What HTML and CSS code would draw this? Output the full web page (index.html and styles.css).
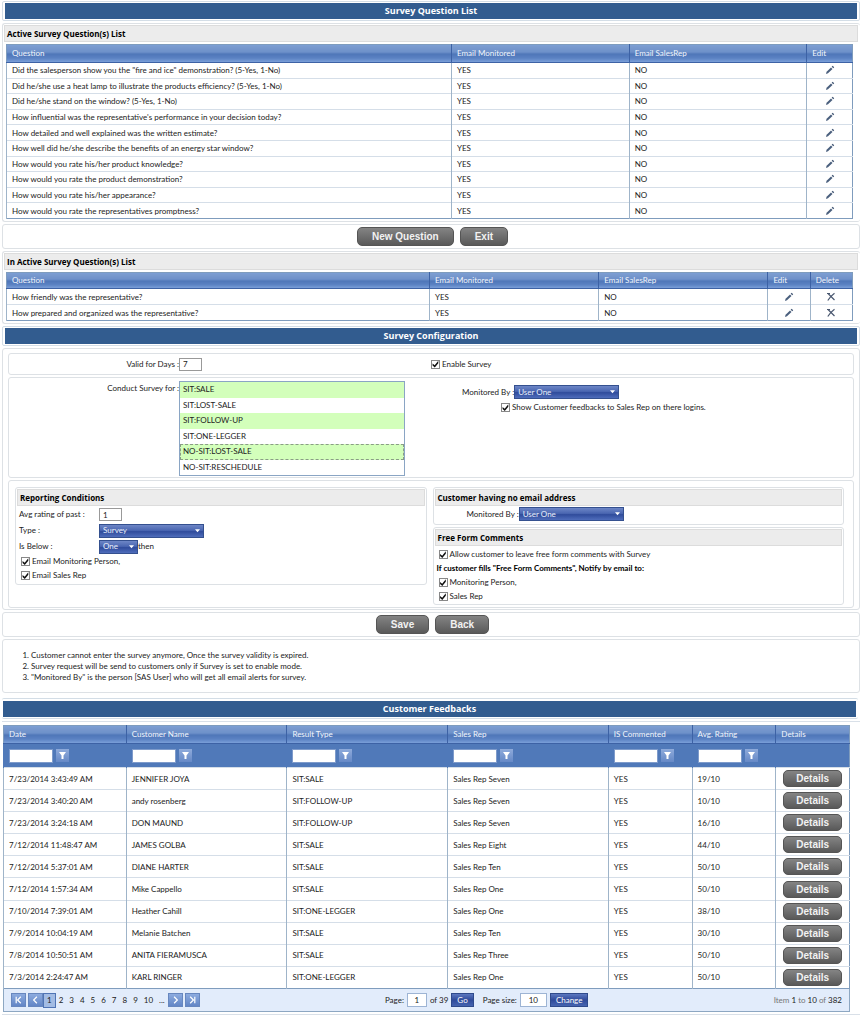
FILE: index.html
```html
<!DOCTYPE html>
<html lang="en">
<head>
<meta charset="utf-8">
<title>Survey Question List</title>
<link rel="stylesheet" href="styles.css">
</head>
<body>
<svg class="sprite" aria-hidden="true">
  <symbol id="pencil" viewBox="0 0 10 10"><path d="M1 9l.6-2.200L6 2.400l1.500 1.500L3 8.200z" fill="#4a5f7d"/><path d="M6.700 1.700L7.700.8 9.200 2.300 8.300 3.200z" fill="#3c5170"/></symbol>
  <symbol id="cross" viewBox="0 0 10 10"><path d="M2 1.500L8.500 8M8.500 1.200C6 3 3.500 5.500 1.800 8.500" fill="none" stroke="#4a5870" stroke-width="1.200"/><path d="M1 1.500h3" stroke="#4a5870"/></symbol>
  <symbol id="funnel" viewBox="0 0 13 13"><path d="M3 3h7L7.500 6.500V10h-2V6.500z" fill="#fff"/></symbol>
  <symbol id="caret" viewBox="0 0 6 4"><path d="M0 0h6L3 3.500z" fill="#fff"/></symbol>
</svg>

<main class="page">
  <header class="banner-box"><h1 class="banner">Survey Question List</h1></header>

  <section class="box list-box">
    <h2 class="heading">Active Survey Question(s) List</h2>
    <table class="grid grid-active">
      <colgroup><col class="w-q"><col class="w-e"><col class="w-e"><col></colgroup>
      <thead><tr><th>Question</th><th>Email Monitored</th><th>Email SalesRep</th><th>Edit</th></tr></thead>
      <tbody>
        <tr><td>Did the salesperson show you the "fire and ice" demonstration? (5-Yes, 1-No)</td><td>YES</td><td>NO</td><td class="act"><button class="icon" aria-label="Edit"><svg><use href="#pencil"/></svg></button></td></tr>
        <tr><td>Did he/she use a heat lamp to illustrate the products efficiency? (5-Yes, 1-No)</td><td>YES</td><td>NO</td><td class="act"><button class="icon" aria-label="Edit"><svg><use href="#pencil"/></svg></button></td></tr>
        <tr><td>Did he/she stand on the window? (5-Yes, 1-No)</td><td>YES</td><td>NO</td><td class="act"><button class="icon" aria-label="Edit"><svg><use href="#pencil"/></svg></button></td></tr>
        <tr><td>How influential was the representative's performance in your decision today?</td><td>YES</td><td>NO</td><td class="act"><button class="icon" aria-label="Edit"><svg><use href="#pencil"/></svg></button></td></tr>
        <tr><td>How detailed and well explained was the written estimate?</td><td>YES</td><td>NO</td><td class="act"><button class="icon" aria-label="Edit"><svg><use href="#pencil"/></svg></button></td></tr>
        <tr><td>How well did he/she describe the benefits of an energy star window?</td><td>YES</td><td>NO</td><td class="act"><button class="icon" aria-label="Edit"><svg><use href="#pencil"/></svg></button></td></tr>
        <tr><td>How would you rate his/her product knowledge?</td><td>YES</td><td>NO</td><td class="act"><button class="icon" aria-label="Edit"><svg><use href="#pencil"/></svg></button></td></tr>
        <tr><td>How would you rate the product demonstration?</td><td>YES</td><td>NO</td><td class="act"><button class="icon" aria-label="Edit"><svg><use href="#pencil"/></svg></button></td></tr>
        <tr><td>How would you rate his/her appearance?</td><td>YES</td><td>NO</td><td class="act"><button class="icon" aria-label="Edit"><svg><use href="#pencil"/></svg></button></td></tr>
        <tr><td>How would you rate the representatives promptness?</td><td>YES</td><td>NO</td><td class="act"><button class="icon" aria-label="Edit"><svg><use href="#pencil"/></svg></button></td></tr>
      </tbody>
    </table>
  </section>

  <div class="box actions"><button class="btn">New Question</button><button class="btn">Exit</button></div>

  <section class="box list-box">
    <h2 class="heading">In Active Survey Question(s) List</h2>
    <table class="grid">
      <colgroup><col class="w-q2"><col class="w-e2"><col class="w-e2"><col class="w-a2"><col></colgroup>
      <thead><tr><th>Question</th><th>Email Monitored</th><th>Email SalesRep</th><th>Edit</th><th>Delete</th></tr></thead>
      <tbody>
        <tr><td>How friendly was the representative?</td><td>YES</td><td>NO</td><td class="act"><button class="icon" aria-label="Edit"><svg><use href="#pencil"/></svg></button></td><td class="act"><button class="icon" aria-label="Delete"><svg><use href="#cross"/></svg></button></td></tr>
        <tr><td>How prepared and organized was the representative?</td><td>YES</td><td>NO</td><td class="act"><button class="icon" aria-label="Edit"><svg><use href="#pencil"/></svg></button></td><td class="act"><button class="icon" aria-label="Delete"><svg><use href="#cross"/></svg></button></td></tr>
      </tbody>
    </table>
  </section>

  <header class="banner-box"><h2 class="banner">Survey Configuration</h2></header>

  <form class="box config">
    <div class="box pair validity">
      <div class="field"><label class="lead" for="days">Valid for Days :</label><input class="text short" id="days" value="7"></div>
      <label class="check"><input type="checkbox" checked>Enable Survey</label>
    </div>

    <div class="box pair conduct">
      <div class="field"><label class="lead" for="types">Conduct Survey for :</label>
        <select class="listbox" id="types" multiple size="6">
          <option selected>SIT:SALE</option><option>SIT:LOST-SALE</option><option selected>SIT:FOLLOW-UP</option><option>SIT:ONE-LEGGER</option><option class="current" selected>NO-SIT:LOST-SALE</option><option>NO-SIT:RESCHEDULE</option>
        </select>
      </div>
      <div class="monitor">
        <div class="field"><label for="mon">Monitored By :</label><span class="drop"><select id="mon"><option>User One</option></select><svg><use href="#caret"/></svg></span></div>
        <label class="check indent"><input type="checkbox" checked>Show Customer feedbacks to Sales Rep on there logins.</label>
      </div>
    </div>

    <div class="box conditions">
      <section class="box panel report">
        <h3 class="heading">Reporting Conditions</h3>
        <div class="rows">
          <label for="avg">Avg rating of past :</label><div><input class="text short" id="avg" value="1"></div>
          <label for="type">Type :</label><div><span class="drop"><select id="type"><option>Survey</option></select><svg><use href="#caret"/></svg></span></div>
          <label for="below">Is Below :</label><div class="field"><span class="drop small"><select id="below"><option>One</option></select><svg><use href="#caret"/></svg></span><span>then</span></div>
        </div>
        <div class="checks">
          <label class="check"><input type="checkbox" checked>Email Monitoring Person,</label>
          <label class="check"><input type="checkbox" checked>Email Sales Rep</label>
        </div>
      </section>
      <div class="stack">
        <section class="box panel">
          <h3 class="heading">Customer having no email address</h3>
          <div class="field noemail"><label for="mon2">Monitored By :</label><span class="drop"><select id="mon2"><option>User One</option></select><svg><use href="#caret"/></svg></span></div>
        </section>
        <section class="box panel">
          <h3 class="heading">Free Form Comments</h3>
          <div class="checks free">
            <label class="check"><input type="checkbox" checked>Allow customer to leave free form comments with Survey</label>
            <p class="note">If customer fills "Free Form Comments", Notify by email to:</p>
            <label class="check"><input type="checkbox" checked>Monitoring Person,</label>
            <label class="check"><input type="checkbox" checked>Sales Rep</label>
          </div>
        </section>
      </div>
    </div>
  </form>

  <div class="box actions"><button class="btn">Save</button><button class="btn">Back</button></div>

  <div class="box notes">
    <ol>
      <li>Customer cannot enter the survey anymore, Once the survey validity is expired.</li>
      <li>Survey request will be send to customers only if Survey is set to enable mode.</li>
      <li>"Monitored By" is the person [SAS User] who will get all email alerts for survey.</li>
    </ol>
  </div>

  <header class="banner-box last"><h2 class="banner">Customer Feedbacks</h2></header>

  <section class="feedback">
    <table class="grid grid-feedback">
      <colgroup><col class="f-date"><col class="f-wide"><col class="f-wide"><col class="f-wide"><col class="f-small"><col class="f-small"><col></colgroup>
      <thead>
        <tr><th>Date</th><th>Customer Name</th><th>Result Type</th><th>Sales Rep</th><th>IS Commented</th><th>Avg. Rating</th><th>Details</th></tr>
        <tr class="filters">
          <td><div class="filter"><input aria-label="Filter date"><button aria-label="Filter"><svg><use href="#funnel"/></svg></button></div></td>
          <td><div class="filter"><input aria-label="Filter customer"><button aria-label="Filter"><svg><use href="#funnel"/></svg></button></div></td>
          <td><div class="filter"><input aria-label="Filter result"><button aria-label="Filter"><svg><use href="#funnel"/></svg></button></div></td>
          <td><div class="filter"><input aria-label="Filter sales rep"><button aria-label="Filter"><svg><use href="#funnel"/></svg></button></div></td>
          <td><div class="filter"><input aria-label="Filter commented"><button aria-label="Filter"><svg><use href="#funnel"/></svg></button></div></td>
          <td><div class="filter"><input aria-label="Filter rating"><button aria-label="Filter"><svg><use href="#funnel"/></svg></button></div></td>
          <td></td>
        </tr>
      </thead>
      <tbody>
        <tr><td>7/23/2014 3:43:49 AM</td><td>JENNIFER JOYA</td><td>SIT:SALE</td><td>Sales Rep Seven</td><td>YES</td><td>19/10</td><td class="act"><button class="btn detail">Details</button></td></tr>
        <tr><td>7/23/2014 3:40:20 AM</td><td>andy rosenberg</td><td>SIT:FOLLOW-UP</td><td>Sales Rep Seven</td><td>YES</td><td>10/10</td><td class="act"><button class="btn detail">Details</button></td></tr>
        <tr><td>7/23/2014 3:24:18 AM</td><td>DON MAUND</td><td>SIT:FOLLOW-UP</td><td>Sales Rep Seven</td><td>YES</td><td>16/10</td><td class="act"><button class="btn detail">Details</button></td></tr>
        <tr><td>7/12/2014 11:48:47 AM</td><td>JAMES GOLBA</td><td>SIT:SALE</td><td>Sales Rep Eight</td><td>YES</td><td>44/10</td><td class="act"><button class="btn detail">Details</button></td></tr>
        <tr><td>7/12/2014 5:37:01 AM</td><td>DIANE HARTER</td><td>SIT:SALE</td><td>Sales Rep Ten</td><td>YES</td><td>50/10</td><td class="act"><button class="btn detail">Details</button></td></tr>
        <tr><td>7/12/2014 1:57:34 AM</td><td>Mike Cappello</td><td>SIT:SALE</td><td>Sales Rep One</td><td>YES</td><td>50/10</td><td class="act"><button class="btn detail">Details</button></td></tr>
        <tr><td>7/10/2014 7:39:01 AM</td><td>Heather Cahill</td><td>SIT:ONE-LEGGER</td><td>Sales Rep One</td><td>YES</td><td>38/10</td><td class="act"><button class="btn detail">Details</button></td></tr>
        <tr><td>7/9/2014 10:04:19 AM</td><td>Melanie Batchen</td><td>SIT:SALE</td><td>Sales Rep Ten</td><td>YES</td><td>30/10</td><td class="act"><button class="btn detail">Details</button></td></tr>
        <tr><td>7/8/2014 10:50:51 AM</td><td>ANITA FIERAMUSCA</td><td>SIT:SALE</td><td>Sales Rep Three</td><td>YES</td><td>50/10</td><td class="act"><button class="btn detail">Details</button></td></tr>
        <tr><td>7/3/2014 2:24:47 AM</td><td>KARL RINGER</td><td>SIT:ONE-LEGGER</td><td>Sales Rep One</td><td>YES</td><td>50/10</td><td class="act"><button class="btn detail">Details</button></td></tr>
      </tbody>
    </table>
    <nav class="pager" aria-label="Pages">
      <div class="pages">
        <button class="step" aria-label="First page"><svg viewBox="0 0 14 13"><path d="M4.500 3v7M9.500 3L6 6.500l3.500 3.500" fill="none" stroke="#fff" stroke-width="1.300"/></svg></button>
        <button class="step" aria-label="Previous page"><svg viewBox="0 0 14 13"><path d="M8.500 3L5 6.500 8.500 10" fill="none" stroke="#fff" stroke-width="1.300"/></svg></button>
        <a class="on" href="#">1</a><a href="#">2</a><a href="#">3</a><a href="#">4</a><a href="#">5</a><a href="#">6</a><a href="#">7</a><a href="#">8</a><a href="#">9</a><a href="#">10</a><a href="#">...</a>
        <button class="step" aria-label="Next page"><svg viewBox="0 0 14 13"><path d="M5.500 3L9 6.500 5.500 10" fill="none" stroke="#fff" stroke-width="1.300"/></svg></button>
        <button class="step" aria-label="Last page"><svg viewBox="0 0 14 13"><path d="M9.500 3v7M4.500 3L8 6.500 4.500 10" fill="none" stroke="#fff" stroke-width="1.300"/></svg></button>
      </div>
      <div class="jump">
        <label for="pg">Page:</label><input class="num" id="pg" value="1"><span>of 39</span><button class="go">Go</button>
        <label class="size" for="ps">Page size:</label><input class="num large" id="ps" value="10"><button class="go">Change</button>
      </div>
      <div class="total">Item <b>1</b> to <b>10</b> of <b>382</b></div>
    </nav>
  </section>
</main>
</body>
</html>
```
FILE: styles.css
```css
* { box-sizing: border-box; }
body { margin: 0; background: #fff; color: #222; font: 8px/11px Lato, "Noto Sans", sans-serif; }
h1, h2, h3, p, ol { margin: 0; }
button, input, select { margin: 0; font: inherit; color: inherit; }
.sprite { display: none; }
.page { padding: 1px 4px 10px 2px; }

.box { border: 1px solid #dde1e5; border-radius: 3px; }
.banner-box { border: 1px solid #d3dde6; border-radius: 2px; padding: 1px 2px; margin-bottom: 2px; }
.banner { background: #325c8f; color: #fff; font: 700 9px/16px "Open Sans", sans-serif; text-align: center; }
.heading { background: #ececec; border: 1px solid #dcdcdc; color: #000; font: 700 8px/15px "Open Sans", sans-serif; padding: 0 2px; }

.list-box { border-right: 0; padding: 1px 2px 2px 1px; margin-bottom: 2px; }
.grid { width: calc(100% - 7px); margin: 2px 5px 0 2px; border-collapse: collapse; table-layout: fixed; border: 1px solid #7f9cbd; }
.grid th { height: 16px; padding: 0 5px; text-align: left; font-weight: 400; color: #f2f6fc; border-left: 1px solid #3d62a5; border-bottom: 1px solid #3d62a5; background: linear-gradient(#7d9dd0, #6d90c9 40%, #4f76b8 50%, #5b82c3 75%, #7fa3dc); }
.grid th:first-child { border-left-color: #7f9cbd; }
.grid td { padding: 0 5px; height: 16px; border-left: 1px solid #9fb4c9; border-top: 1px solid #d5dee8; line-height: 10px; white-space: nowrap; }
.grid .act { text-align: center; }
.grid-active { height: 175px; }
.grid-active th { height: 18px; }
.grid-active td { height: 15px; }
.w-q { width: 52.600%; } .w-e { width: 21%; }
.w-q2 { width: 50%; } .w-e2 { width: 20%; } .w-a2 { width: 5%; }
.icon { display: block; margin: 0 auto; padding: 0; border: 0; background: none; width: 10px; height: 10px; }
.icon svg { display: block; width: 10px; height: 10px; }

.actions { display: flex; justify-content: center; gap: 6px; padding: 2px 2px 2px 5px; margin-bottom: 2px; }
.btn { border: 1px solid #555; border-radius: 5px; background: linear-gradient(#848484, #595959); color: #f2f2f2; font: 700 10px/17px "Liberation Sans", Arial, sans-serif; padding: 0 14px; }

.config { padding: 4px 5px 1px; margin-bottom: 2px; }
.pair { display: grid; grid-template-columns: 1fr 1fr; margin-bottom: 2px; }
.field { display: flex; align-items: center; }
.lead { width: 170px; text-align: right; }
.text { border: 1px solid #999; background: #fff; height: 13px; padding: 0 3px; }
.short { width: 23px; }
.check { display: flex; align-items: center; gap: 2px; }
.check input { appearance: none; width: 9px; height: 9px; border: 1px solid #888; background: #fff; display: grid; }
.check input:checked::before { content: ""; background: #111; clip-path: polygon(8% 42%, 38% 68%, 90% 5%, 90% 38%, 40% 100%, 8% 70%); }
.validity { height: 22px; align-items: center; }
.conduct { padding: 3px 0 1px; }
.conduct > .field { align-items: flex-start; }
.conduct .lead { padding-top: 2px; }
.listbox { width: 226px; border: 1px solid #8aa5c4; border-radius: 0; padding: 0; overflow: hidden; background: #fff; height: 95px; }
.listbox option { height: 15px; min-height: 15px; padding: 2px 3px 0; line-height: 13px; color: #222; }
.listbox option:nth-child(odd) { height: 16px; }
.listbox option:checked { background: linear-gradient(#d3ffbb, #d3ffbb); -webkit-text-fill-color: #222; }
.listbox .current { outline: 1px dashed #8a9c86; outline-offset: -1px; }
.monitor { padding: 4px 0 0 31px; }
.indent { margin: 3px 0 0 39px; }
.drop { display: grid; width: 105px; }
.drop > * { grid-area: 1 / 1; }
.drop select { appearance: none; height: 14px; border: 1px solid #34508f; border-radius: 0; background: linear-gradient(#6d86c6, #4a66b1 45%, #304c9c 55%, #4f6dbb); color: #e9effb; padding: 0 3px; }
.drop svg { width: 5px; height: 4px; justify-self: end; align-self: center; margin-right: 4px; pointer-events: none; }
.small { width: 39px; }

.conditions { display: grid; grid-template-columns: 1fr 1fr; gap: 6px; padding: 6px 9px 2px 6px; align-items: start; }
.panel { padding: 1px; }
.rows { display: grid; grid-template-columns: 80px 1fr; grid-auto-rows: 15px; gap: 1px 0; align-items: center; padding: 1px 1px 0 2px; }
.checks { display: grid; gap: 3px; padding: 2px 4px; }
.stack { display: grid; gap: 2px; }
.noemail { padding: 1px 0 2px 32px; }
.free { padding: 3px 4px 1px; }
.note { color: #000; font-weight: 700; margin-left: -2px; }

.notes { padding: 10px 0 9px; margin-bottom: 5px; }
.notes ol { padding-left: 28px; }
.last { margin: 0 2px 2px 0; padding: 2px 2px 1px 1px; border-width: 1px 0; }
.feedback { border: 1px solid #d9e0e8; border-left: 0; border-right: 0; padding: 3px 0 2px; }
.grid-feedback { width: calc(100% - 11px); margin: 0 0 0 1px; height: 264px; }
.grid-feedback th { height: 18px; }
.f-date { width: 14.500%; } .f-wide { width: 19%; } .f-small { width: 9.900%; }
.grid .filters td { height: 24px; background: #5079b9; border-color: #5079b9; }
.filter { display: flex; gap: 3px; }
.filter input { width: 44px; height: 14px; border: 1px solid #7e9bcb; padding: 0; background: #fff; }
.filter button { width: 13px; height: 13px; padding: 0; border: 0; background: linear-gradient(#8eaadb, #6689c6); }
.filter svg { display: block; width: 13px; height: 13px; }
.grid .detail { padding: 0 12px; line-height: 15px; display: block; margin: 0 auto; }

.pager { display: grid; grid-template-columns: 45% auto 1fr; align-items: center; width: calc(100% - 11px); margin-left: 1px; height: 23px; padding: 0 7px; background: #e2ecfb; border: 1px solid #8da7c2; border-top: 0; }
.pages, .jump { display: flex; align-items: center; }
.pages a { padding: 0 3px; color: #222; text-decoration: none; line-height: 13px; }
.pages .on { background: #a3bce4; border: 1px solid #4f74b5; }
.step { width: 15px; height: 14px; padding: 0; border: 1px solid #6787bf; background: linear-gradient(#8cabdf, #6386c6); }
.step svg { display: block; width: 13px; height: 12px; }
.step + .step { margin-left: 2px; }
.jump { gap: 3px; }
.num { width: 20px; height: 14px; border: 1px solid #9db4d4; text-align: center; padding: 0; background: #fff; }
.large { width: 27px; }
.go { height: 14px; line-height: 12px; border: 1px solid #2f4a8c; background: linear-gradient(#5c78c0, #2f4a9a 50%, #4664b0); color: #fff; padding: 0 5px; }
.size { margin-left: 6px; }
.total { text-align: right; color: #777; }
.total b { color: #222; font-weight: 400; }
```
